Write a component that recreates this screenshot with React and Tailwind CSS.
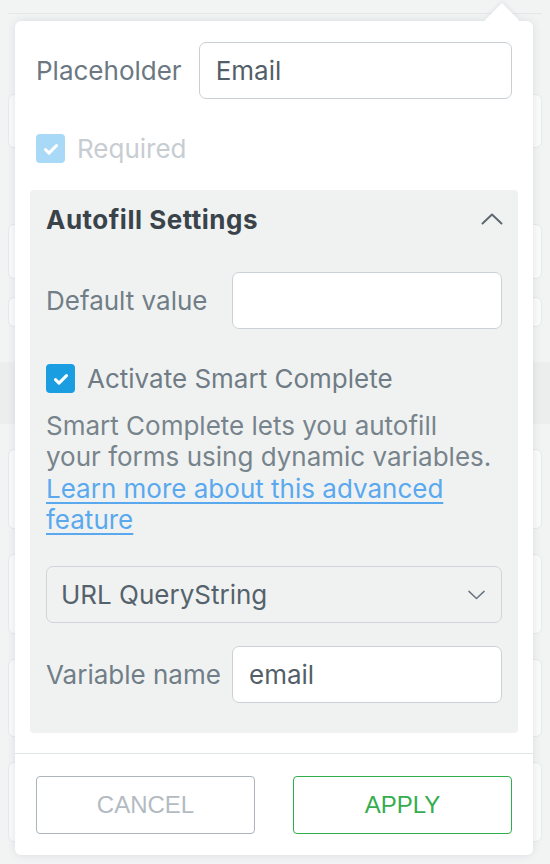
import React from "react";

function Check({ className }) {
  return (
    <svg viewBox="0 0 20 20" className={className} fill="none">
      <path d="M5 10.5l3.2 3.2L15 7" stroke="white" strokeWidth="2.8" strokeLinecap="round" strokeLinejoin="round" />
    </svg>
  );
}

function BgCard({ h }) {
  return <div className={`mx-2 rounded-md border border-[#e6eaec] bg-[#fafbfb] ${h}`} />;
}

export default function App() {
  return (
    <div className="relative w-[550px] h-[864px] overflow-hidden bg-[#f2f4f4] font-['Inter',sans-serif]">
      {/* background content */}
      <div className="flex flex-col pt-[13px]">
        <div className="mx-2 border-t border-[#e4e8ea]" />
        <div className="mt-[80px]"><BgCard h="h-[54px]" /></div>
        <div className="mt-[76px]"><BgCard h="h-[55px]" /></div>
        <div className="mt-[18px]"><BgCard h="h-[30px]" /></div>
        <div className="mt-[35px] h-[62px] bg-[#eceeee]" />
        <div className="flex flex-col gap-[25px] pt-[25px]">
          <BgCard h="h-[80px]" />
          <BgCard h="h-[80px]" />
          <BgCard h="h-[78px]" />
          <BgCard h="h-[80px]" />
        </div>
      </div>

      {/* popover */}
      <div className="absolute left-[15px] top-[21px] w-[518px] rounded-[6px] bg-white shadow-[0_0_8px_rgba(40,60,70,0.12)]">
        <div className="absolute left-[475px] top-[-13px] h-[24px] w-[24px] rotate-45 bg-white shadow-[-2px_-2px_4px_rgba(40,60,70,0.06)]" />
        <div className="relative px-[21px] pt-[21px]">
          <div className="flex items-center gap-[17px]">
            <span className="text-[26px] text-[#6b7882] leading-none">Placeholder</span>
            <div className="flex h-[57px] flex-1 items-center rounded-[7px] border-[1.5px] border-[#c9d0d5] px-[16px] text-[26px] text-[#535f68]">
              Email
            </div>
          </div>
          <div className="mt-[35px] flex items-center gap-[12px]">
            <div className="flex h-[29px] w-[29px] items-center justify-center rounded-[4px] bg-[#a8d9f6]">
              <Check className="h-[22px] w-[22px]" />
            </div>
            <span className="text-[26px] text-[#c7cdd2] leading-none">Required</span>
          </div>
        </div>

        <div className="relative mx-[15px] mt-[27px] rounded-[4px] bg-[#f0f2f2] px-[16px] pt-[14px] pb-[30px]">
          <div className="flex h-[30px] items-center justify-between">
            <span className="text-[26px] font-bold tracking-[0.5px] text-[#3b434a]">Autofill Settings</span>
            <svg viewBox="0 0 22 12" className="mr-[-1px] h-[12px] w-[22px]" fill="none">
              <path d="M1.5 10.5L11 1.5l9.5 9" stroke="#5d6870" strokeWidth="2" strokeLinecap="round" strokeLinejoin="round" />
            </svg>
          </div>

          <div className="mt-[38px] flex items-center justify-between">
            <span className="text-[26px] text-[#717e87]">Default value</span>
            <div className="h-[57px] w-[270px] rounded-[7px] border-[1.5px] border-[#cbd2d7] bg-white" />
          </div>

          <div className="mt-[35px] flex items-center gap-[12px]">
            <div className="flex h-[29px] w-[29px] items-center justify-center rounded-[4px] bg-[#1b9de2]">
              <Check className="h-[22px] w-[22px]" />
            </div>
            <span className="text-[26px] text-[#6f7c85] leading-none">Activate Smart Complete</span>
          </div>

          <p className="mt-[17px] text-[26px] leading-[31.3px] text-[#78848c]">
            Smart Complete lets you autofill
            <br />
            your forms using dynamic variables.
            <br />
            <a className="text-[#5aa9ee] underline decoration-[1.5px] underline-offset-[4px]">
              Learn more about this advanced
              <br />
              feature
            </a>
          </p>

          <div className="mt-[31px] flex h-[57px] items-center justify-between rounded-[7px] border-[1.5px] border-[#cfd5d9] pl-[14px] pr-[16px]">
            <span className="text-[26px] text-[#56626b]">URL QueryString</span>
            <svg viewBox="0 0 18 10" className="h-[10px] w-[17px]" fill="none">
              <path d="M1 1.2l8 7.5 8-7.5" stroke="#6b7680" strokeWidth="1.6" strokeLinecap="round" strokeLinejoin="round" />
            </svg>
          </div>

          <div className="mt-[23px] flex items-center justify-between">
            <span className="text-[26px] text-[#717e87]">Variable name</span>
            <div className="flex h-[57px] w-[270px] items-center rounded-[7px] border-[1.5px] border-[#cbd2d7] bg-white px-[16px] text-[26px] text-[#535f68]">
              email
            </div>
          </div>
        </div>

        <div className="mt-[20px] border-t-[1.5px] border-[#e0e6e8]" />
        <div className="grid grid-cols-2 gap-[38px] px-[21px] pt-[22px] pb-[21px] font-['Liberation_Sans',sans-serif]">
          <div className="flex h-[58px] items-center justify-center rounded-[4px] border-[1.5px] border-[#adb5bc] text-[24px] text-[#b3bbc2]">
            CANCEL
          </div>
          <div className="flex h-[58px] items-center justify-center rounded-[4px] border-[1.5px] border-[#2fae4c] text-[24px] text-[#35ad4f]">
            APPLY
          </div>
        </div>
      </div>
    </div>
  );
}
